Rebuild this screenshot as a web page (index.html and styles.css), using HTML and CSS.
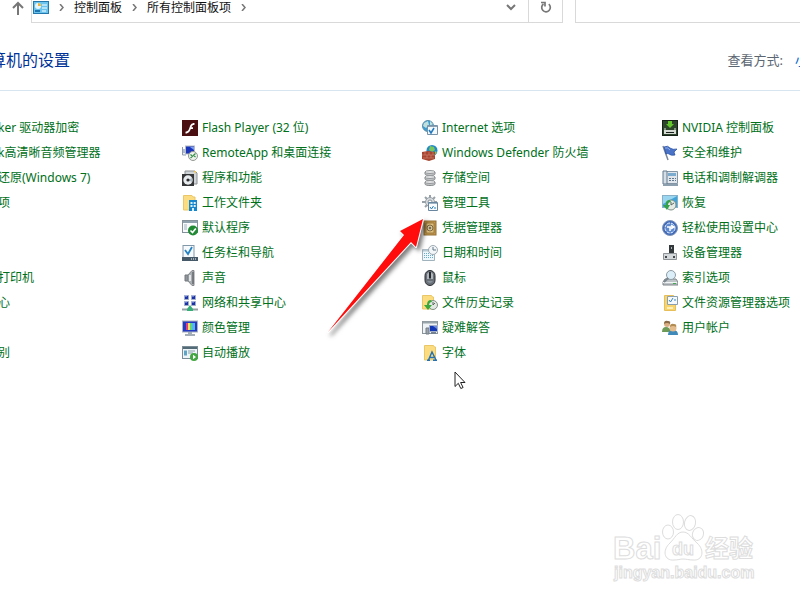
FILE: index.html
```html
<!DOCTYPE html>
<html lang="zh-CN">
<head>
    <meta charset="UTF-8">
    <meta name="viewport" content="width=device-width, initial-scale=1.0">
    <title>所有控制面板项</title>
    <link rel="stylesheet" href="styles.css">
</head>
<body>
    <nav class="toolbar">
        <button class="icon-btn up-btn" aria-label="向上">
            <svg width="12" height="14" viewBox="0 0 12 14" fill="none" stroke="#777" stroke-width="2"><path d="M6 14V2M1 7l5-5 5 5"/></svg>
        </button>
        <div class="address">
            <svg class="address-icon" width="16" height="14" viewBox="0 0 16 14"><rect x=".5" y=".5" width="15" height="12" fill="#6bc4ee" stroke="#2379ae"/><circle cx="5" cy="5" r="3" fill="#e8f6fc"/><path d="M5 5V2a3 3 0 0 1 3 3z" fill="#f0b43c"/><path d="M9 4h5M9 7h5M9 10h4" stroke="#fff"/><path d="M2 10h5" stroke="#1f75ae" stroke-width="2"/></svg>
            <svg class="sep" width="5" height="7" viewBox="0 0 5 7"><path d="M1 0l3 3.500-3 3.500" fill="none" stroke="#777" stroke-width="1.500"/></svg>
            <a href="#">控制面板</a>
            <svg class="sep" width="5" height="7" viewBox="0 0 5 7"><path d="M1 0l3 3.500-3 3.500" fill="none" stroke="#777" stroke-width="1.500"/></svg>
            <a href="#">所有控制面板项</a>
            <svg class="sep" width="5" height="7" viewBox="0 0 5 7"><path d="M1 0l3 3.500-3 3.500" fill="none" stroke="#777" stroke-width="1.500"/></svg>
            <button class="icon-btn history-btn" aria-label="以前的位置">
                <svg width="10" height="7" viewBox="0 0 10 7" fill="none" stroke="#777" stroke-width="2"><path d="M1 1l4 4 4-4"/></svg>
            </button>
            <button class="icon-btn refresh-btn" aria-label="刷新">
                <svg width="12" height="12" viewBox="0 0 12 12" fill="none" stroke="#777" stroke-width="1.700"><path d="M8.800 3.200A4.300 4.300 0 1 1 3.500 3M1 1.500h4v4"/></svg>
            </button>
        </div>
        <input class="search" type="search" aria-label="搜索控制面板">
    </nav>

    <header class="heading">
        <h1>算机的设置</h1>
        <div class="view-by">
            <span>查看方式:</span>
            <button class="view-btn">小</button>
        </div>
    </header>

    <main class="items">
        <ul class="column column-first">
            <li><a href="#">ker 驱动器加密</a></li>
            <li><a href="#">k高清晰音频管理器</a></li>
            <li><a href="#">还原(Windows 7)</a></li>
            <li><a href="#">项</a></li>
            <li></li>
            <li></li>
            <li><a href="#">打印机</a></li>
            <li><a href="#">心</a></li>
            <li></li>
            <li><a href="#">别</a></li>
        </ul>

        <ul class="column">
            <li><a href="#">
                <svg viewBox="0 0 16 16"><rect width="16" height="16" fill="#4a0f10"/><path d="M12.500 3C9 3 8.300 5.300 7.500 7.500 6.700 10 6 11.500 3.500 11.700V13.500C7 13.500 8 11 8.800 9H11V7.200H9.500C10.200 5.500 11 4.800 12.500 4.800z" fill="#fff"/></svg>
                Flash Player (32 位)</a></li>
            <li><a href="#">
                <svg viewBox="0 0 16 16"><path d="M.5 2v8H4" fill="#eee" stroke="#8c9bb0"/><path d="M1 5h2M1 7h2" stroke="#6f86b5"/><rect x="3.500" y="1" width="9" height="8" fill="#1b35b8" stroke="#b6bdc8"/><path d="M8 2h4v3z" fill="#7b9df4"/><circle cx="11" cy="11" r="4.500" fill="#eef1ec" stroke="#909890"/><path d="M8.500 9.500l2 1.700-2 2M13.500 8.500l-2 1.700 2 2" fill="none" stroke="#349047" stroke-width="1.200"/></svg>
                RemoteApp 和桌面连接</a></li>
            <li><a href="#">
                <svg viewBox="0 0 16 16"><path d="M3 1h10l2 2v11H3z" fill="#cfd4d8" stroke="#8c9194"/><path d="M12 1h2v3" fill="#f4c24a"/><rect y="4" width="12" height="12" fill="#343638"/><circle cx="6" cy="10" r="4.700" fill="#e9ecef"/><path d="M6 10l4-2v4z" fill="#aab9c4"/><circle cx="6" cy="10" r="1.600" fill="#292929"/></svg>
                程序和功能</a></li>
            <li><a href="#">
                <svg viewBox="0 0 16 16"><path d="M1.500.5H10l1 1.500h2V15H1.500z" fill="#fbdc80" stroke="#e9c668"/><rect x="7" y="5" width="8" height="11" fill="#1686cc"/><path d="M8.500 7h2v2h-2zM11.700 7h2v2h-2zM8.500 10h2v2h-2zM11.700 10h2v2h-2zM10 13h2v3h-2z" fill="#d8f1ff"/></svg>
                工作文件夹</a></li>
            <li><a href="#">
                <svg viewBox="0 0 16 16"><rect x=".5" y=".5" width="15" height="12" fill="#f8fafb" stroke="#85929b"/><path d="M1 2h14" stroke="#8fa2ae" stroke-width="2"/><path d="M2 5h3M2 7h3M2 9h3" stroke="#9eb1c0"/><circle cx="11" cy="10.500" r="5" fill="#218a35"/><path d="M8.500 10.500l2 2 3.300-4" fill="none" stroke="#fff" stroke-width="1.600"/></svg>
                默认程序</a></li>
            <li><a href="#">
                <svg viewBox="0 0 16 16"><rect x="1" y=".5" width="11" height="12" fill="#f6fafd" stroke="#8297a8"/><path d="M3 5l3 4 4-7" fill="none" stroke="#2583c5" stroke-width="1.800"/><rect y="12" width="16" height="4" fill="#465968"/><path d="M9 14h1M11 14h1M13 14h1" stroke="#fff"/></svg>
                任务栏和导航</a></li>
            <li><a href="#">
                <svg viewBox="0 0 16 16"><path d="M3 5h3v6H3z" fill="#90969b" stroke="#74797e"/><path d="M6 5l4-4.500h2v15h-2L6 11z" fill="#a9aeb2" stroke="#85898d"/><path d="M8 5v6" stroke="#e3e6e8" stroke-width="2"/><path d="M11 2v12" stroke="#666b70" stroke-width="1.500"/></svg>
                声音</a></li>
            <li><a href="#">
                <svg viewBox="0 0 16 16"><g fill="#1c32a8" stroke="#a1acc7"><path d="M2.500.5h4v4h-4zM9.500.5h4v4h-4zM2.500 6.500h4v4h-4zM9.500 6.500h4v4h-4z"/></g><path d="M3 1h2M10 1h2M3 7h2M10 7h2" stroke="#a6bafc"/><path d="M0 14.500h16" stroke="#96a1a5" stroke-width="2"/><path d="M8 10l3 4v2H5v-2z" fill="#36ae77"/></svg>
                网络和共享中心</a></li>
            <li><a href="#">
                <svg viewBox="0 0 16 16"><rect x=".5" y="1" width="15" height="11" fill="#253ac3" stroke="#abb3be"/><path d="M4 3h3v7H4z" fill="#e0407e"/><path d="M6 3h3v7H6z" fill="#f4e46a"/><path d="M8 3h2v7H8z" fill="#5fd680"/><path d="M10 3h3v7h-3z" fill="#55b5f0"/><path d="M6 12h4v2h3v2H3v-2h3z" fill="#a3adb7"/></svg>
                颜色管理</a></li>
            <li><a href="#">
                <svg viewBox="0 0 16 16"><rect x=".5" y="1.500" width="15" height="12" fill="#eef4f7" stroke="#7b8e98"/><path d="M1 3h14" stroke="#526b77" stroke-width="2"/><path d="M2 5.500h3v5H2z" fill="#60a4c5"/><path d="M6 6h7M6 8h5" stroke="#899fa9"/><circle cx="12" cy="12" r="4" fill="#43a741"/><path d="M11 9.700l3 2.300-3 2.300z" fill="#fff"/></svg>
                自动播放</a></li>
        </ul>

        <ul class="column">
            <li><a href="#">
                <svg viewBox="0 0 16 16"><circle cx="6" cy="6" r="5.500" fill="#3b9ed2" stroke="#5c8da7"/><path d="M2 3l4-2 1 4-3 3-3-2zM8 1l3 3-3 2z" fill="#bfe0dd"/><path d="M5.500 5.500h10v9h-10z" fill="#f5f8fb" stroke="#7793a9"/><path d="M6 6.500h9" stroke="#8ba1b2"/><path d="M7 10l2 3 3-5" fill="none" stroke="#207ac2" stroke-width="1.500"/></svg>
                Internet 选项</a></li>
            <li><a href="#">
                <svg viewBox="0 0 16 16"><circle cx="10" cy="5.500" r="5.500" fill="#238ac8"/><path d="M8 1l4 1 1 3-3 2-3-2zM13 6l2 1-2 3z" fill="#79c65d"/><path d="M0 7l6-1 7 1v7l-6 2-7-2z" fill="#a74531"/><path d="M0 10h13M1 13h11M3 7v3M7 7v3M11 7v3M5 10v3M9 10v3" stroke="#d08a76" stroke-width=".6"/></svg>
                Windows Defender 防火墙</a></li>
            <li><a href="#">
                <svg viewBox="0 0 16 16"><g fill="#c4c6c7" stroke="#85898c"><path d="M3 2v2c0 2 10 2 10 0V2M3 7v2c0 2 10 2 10 0V7M3 12v2c0 2 10 2 10 0v-2"/></g><g fill="#e2e4e5" stroke="#96999b"><ellipse cx="8" cy="2" rx="5" ry="1.500"/><ellipse cx="8" cy="7" rx="5" ry="1.500"/><ellipse cx="8" cy="12" rx="5" ry="1.500"/></g></svg>
                存储空间</a></li>
            <li><a href="#">
                <svg viewBox="0 0 16 16"><path d="M8 0v14M0 7h15M3 2l10 10M13 2L3 12" stroke="#98a1a7" stroke-width="2"/><circle cx="8" cy="7" r="4.500" fill="#d7dcdf" stroke="#98a1a7"/><circle cx="8" cy="7" r="2" fill="#fff" stroke="#8c969d"/><path d="M6.500 7.500h9v8h-9z" fill="#fafcff" stroke="#6986a1"/><path d="M7 8.500h8" stroke="#9fb4c5"/><path d="M8 12l1.500 2 2-3M12 13h2" fill="none" stroke="#257dbc"/></svg>
                管理工具</a></li>
            <li><a href="#">
                <svg viewBox="0 0 16 16"><rect x="2" y="1" width="12" height="14" fill="#bf9449" stroke="#937036"/><path d="M4 3h8v10H4z" fill="#dfc17d" stroke="#9b783e"/><circle cx="8" cy="8" r="3" fill="#d7c69a" stroke="#7a6740"/><circle cx="8" cy="8" r="1.200" fill="#776c59"/></svg>
                凭据管理器</a></li>
            <li><a href="#">
                <svg viewBox="0 0 16 16"><path d="M.5 4.500h12v11H.5z" fill="#eef7fb" stroke="#a0b2bc"/><path d="M1 5.500h11" stroke="#b7cad4" stroke-width="2"/><path d="M2 8.500h9M2 10.500h9M2 12.500h9" stroke="#69aaca" stroke-dasharray="1 1"/><circle cx="11" cy="5" r="4.500" fill="#f3f6f8" stroke="#9daab2"/><path d="M11 2v3h3" fill="none" stroke="#607786"/></svg>
                日期和时间</a></li>
            <li><a href="#">
                <svg viewBox="0 0 16 16"><rect x="3" y=".5" width="10" height="15" rx="5" fill="#6a7078" stroke="#292d33"/><path d="M5 9V4l2-2v7zM9 2l2 2v5H9z" fill="#b1b6bc"/><path d="M8 2v6" stroke="#252a30" stroke-width="2"/><path d="M5 11q3 4 6 0" fill="#89919a"/></svg>
                鼠标</a></li>
            <li><a href="#">
                <svg viewBox="0 0 16 16"><path d="M.5.5h9l1 1.500h1v12H.5z" fill="#fbdd80" stroke="#e9c668"/><circle cx="11" cy="10" r="4.500" fill="#e2e8e3" stroke="#849187"/><path d="M11 7v3l2-2" fill="none" stroke="#59665d"/><path d="M9 5q-4 0-4 5H2l4 5 4-5H7q0-3 3-3z" fill="#3ba83c"/></svg>
                文件历史记录</a></li>
            <li><a href="#">
                <svg viewBox="0 0 16 16"><rect x=".5" y="1.500" width="15" height="12" fill="#f0f3f5" stroke="#89949b"/><path d="M1 2.500h14" stroke="#98a4ab" stroke-width="2"/><path d="M4 8h3v6H4z" fill="#9aa2aa" stroke="#737c88"/><rect x="7.500" y="5.500" width="8" height="6" fill="#1437b5" stroke="#a5b0c8"/><path d="M11 6h4v3z" fill="#6b8ce0"/><path d="M9 13h5" stroke="#758293" stroke-width="2"/></svg>
                疑难解答</a></li>
            <li><a href="#">
                <svg viewBox="0 0 16 16"><path d="M2.500.5h9l1 1.500h1v13h-11z" fill="#fbdc80" stroke="#e9c668"/><path d="M5 15.200h3M11 15.200h4M6.500 15L10 7l4 8M8 12.500h4.500" fill="none" stroke="#2471b3" stroke-width="1.400"/></svg>
                字体</a></li>
        </ul>

        <ul class="column">
            <li><a href="#">
                <svg viewBox="0 0 16 16"><rect width="16" height="16" fill="#182118"/><rect x="1" y="1" width="14" height="14" fill="#2c452b"/><path d="M6 1h4v3h2L8 8 4 4h2z" fill="#63c52c"/><path d="M3 8v3M13 8v3" stroke="#dfe5dd"/><path d="M2 10h12v4H2z" fill="#d5dad3"/><path d="M4 12h8v1H4z" fill="#192019"/></svg>
                NVIDIA 控制面板</a></li>
            <li><a href="#">
                <svg viewBox="0 0 16 16"><path d="M1 1l5 14" stroke="#7b879d" stroke-width="1.500"/><path d="M2 2q4-2 6 1 3 2 7 1l-3 3 1 3q-4 1-6-1-1-1-3 0z" fill="#4a73c8" stroke="#234ca1" stroke-width=".7"/><path d="M3 3q3-1 5 2" stroke="#93b0eb" fill="none"/></svg>
                安全和维护</a></li>
            <li><a href="#">
                <svg viewBox="0 0 16 16"><path d="M1.500 1.500h14v12h-14z" fill="#e0e6eb" stroke="#8496a5"/><path d="M1 1h4v13H1z" fill="#d3dee7" stroke="#647b8e"/><path d="M6 3h8v3H6z" fill="#7cabd0"/><path d="M7 8.500h7M7 10.500h7" stroke="#60798d" stroke-dasharray="2 1"/><path d="M1 15h15" stroke="#8b9faf" stroke-width="2"/></svg>
                电话和调制解调器</a></li>
            <li><a href="#">
                <svg viewBox="0 0 16 16"><rect x=".5" y=".5" width="15" height="12" fill="#40a4dc" stroke="#88b1c8"/><path d="M1 1h14L1 9z" fill="#9bd6f1"/><circle cx="9" cy="10" r="5" fill="#e6ebe7" stroke="#7e9287"/><path d="M9 7v3l3-2" fill="none" stroke="#596a60"/><path d="M8 5Q3 5 4 10H1l4 5 3-5H6q0-3 3-3z" fill="#34a24b"/></svg>
                恢复</a></li>
            <li><a href="#">
                <svg viewBox="0 0 16 16"><circle cx="8" cy="8" r="7.500" fill="#416bb9" stroke="#8195ba"/><circle cx="8" cy="8" r="5" fill="#5f89cf" stroke="#eef4ff" stroke-dasharray="3 1"/><path d="M5 7h7M9 5l3 2-3 2M8 7v4" fill="none" stroke="#fff" stroke-width="1.500"/></svg>
                轻松使用设置中心</a></li>
            <li><a href="#">
                <svg viewBox="0 0 16 16"><rect x="7" y="0" width="5" height="9" fill="#33383b"/><path d="M9 2h1v2H9z" fill="#a9b4b9"/><path d="M1.500 8.500h13v6h-13z" fill="#d5d8da" stroke="#8d9396"/><path d="M3 11h2v2H3zM11 11h2v2h-2z" fill="#43494d"/></svg>
                设备管理器</a></li>
            <li><a href="#">
                <svg viewBox="0 0 16 16"><path d="M3 9h11l2 3v3H1v-3z" fill="#bec4c7" stroke="#7e8589"/><path d="M1 12.500h14" stroke="#f2f5f7"/><circle cx="9" cy="5" r="4.500" fill="#dceef8" stroke="#8e9da6"/><path d="M6 8l-4 4" stroke="#7b878f" stroke-width="2"/><path d="M11 13.500h3" stroke="#44a751"/></svg>
                索引选项</a></li>
            <li><a href="#">
                <svg viewBox="0 0 16 16"><path d="M2.500.5h9l1 1.500h1v13.500h-11z" fill="#f8d46f" stroke="#e6bf5a"/><path d="M5.500 1.500h10v8h-10z" fill="#f6f9fc" stroke="#8aa0b1"/><path d="M7 5l1.500 2L11 3M12 5h2" fill="none" stroke="#3884bf"/><path d="M5 13h6" stroke="#fff0b9" stroke-width="2"/></svg>
                文件资源管理器选项</a></li>
            <li><a href="#">
                <svg viewBox="0 0 16 16"><path d="M0 12q0-5 4-5t5 5z" fill="#6e9a57"/><circle cx="5" cy="4" r="3" fill="#dbae83"/><path d="M2 4q0-4 4-3 3 0 2 3Q5 2 2 4z" fill="#8a6a48"/><path d="M6 15q0-5 5-5t5 5z" fill="#408ab9"/><circle cx="11" cy="8" r="3.500" fill="#e3bb8d"/><path d="M8 7q0-4 4-3 3 0 2 3-3-2-6 0z" fill="#b08c52"/></svg>
                用户帐户</a></li>
        </ul>
    </main>

    <!-- pointer to the highlighted item -->
    <svg class="arrow" width="110" height="130" viewBox="0 0 110 130">
        <path d="M98 5L75 17l4 4L3 118 86 28l5 5z" fill="#fff" stroke="#fff" stroke-width="2" stroke-linejoin="round"/>
        <path d="M98 5L75 17l4 4L3 118 86 28l5 5z" fill="#ff0d0d"/>
    </svg>
    <svg class="cursor" width="13" height="19" viewBox="0 0 13 19"><path d="M1 1v14.500l3.300-3.200 2.500 5.200 2.300-1-2.500-5H11z" fill="#fff" stroke="#222"/></svg>

    <svg class="watermark" width="150" height="75" viewBox="0 0 150 75">
        <g fill="#fff" stroke="#ddd">
            <text class="wm-bai" x="3" y="49">Bai</text>
            <ellipse cx="58" cy="22" rx="5.500" ry="7"/>
            <ellipse cx="68" cy="12" rx="5.500" ry="7.500"/>
            <ellipse cx="80" cy="13" rx="5.500" ry="7.500" transform="rotate(12 80 13)"/>
            <ellipse cx="88" cy="24" rx="5.500" ry="6.500" transform="rotate(20 88 24)"/>
            <path d="M73 22c-6 0-8 6-13 11-8 7-6 18 4 17 4 0 6-1 9-1s6 1 10 1c10 1 12-10 4-17-6-5-8-11-14-11z"/>
            <text class="wm-du" x="62" y="45">du</text>
            <text class="wm-cn" x="95" y="47">经验</text>
            <text class="wm-url" x="4" y="68">jingyan.baidu.com</text>
        </g>
    </svg>
</body>
</html>
```
FILE: styles.css
```css
* {
    box-sizing: border-box;
}

body {
    position: relative;
    margin: 0;
    min-height: 100vh;
    overflow: hidden;
    background: #fff;
    color: #111;
    font-family: "Noto Sans", "Noto Sans CJK SC", sans-serif;
    font-size: 12px;
    line-height: 16px;
    white-space: nowrap;
}

a {
    color: inherit;
    text-decoration: none;
}

a:hover { text-decoration: underline; }

button {
    padding: 0;
    border: none;
    background: none;
    font: inherit;
    cursor: pointer;
}

/* toolbar */
.toolbar {
    display: flex;
    height: 23px;
}

.icon-btn {
    display: flex;
    align-items: center;
    justify-content: center;
}

.up-btn {
    width: 31px;
    padding: 0 0 8px 5px;
}

.address {
    display: flex;
    flex: 1;
    align-items: center;
    border: 1px solid #d9d9d9;
    border-top: none;
    padding-left: 1px;
}

.address > * {
    margin-bottom: 7px;
}

.address .sep {
    margin-left: 10px;
    margin-right: 10px;
}

.address .history-btn {
    width: 34px;
    margin-left: auto;
}

.address .refresh-btn {
    align-self: stretch;
    width: 34px;
    margin-bottom: 0;
    padding-bottom: 8px;
    border-left: 1px solid #d9d9d9;
}

.search {
    width: 225px;
    margin-left: 12px;
    border: 1px solid #d9d9d9;
    border-top: none;
    border-right: none;
    outline: none;
}

/* heading */
.heading {
    display: flex;
    align-items: center;
    justify-content: space-between;
    height: 68px;
    padding-top: 6px;
    border-bottom: 1px solid #d6e5f0;
}

h1 {
    margin: 0 0 0 -10px;
    color: #003399;
    font-size: 16px;
    font-weight: normal;
}

.view-by {
    display: flex;
    gap: 12px;
    margin-right: -8px;
    color: #5c6672;
    font-size: 13px;
}

.view-btn { color: #0066cc; }

/* item list */
.items {
    display: grid;
    grid-template-columns: 182px 240px 240px 1fr;
    padding-top: 24px;
}

.column {
    margin: 0;
    padding: 0;
    list-style: none;
    color: #00701a;
}

.column-first { margin-left: -2px; }

.column li {
    height: 25px;
}

.column a {
    display: flex;
    align-items: center;
    gap: 4px;
    height: 25px;
}

.column svg {
    flex: none;
    width: 16px;
    height: 16px;
}

/* overlays */
.arrow {
    position: absolute;
    top: 214px;
    left: 325px;
    filter: drop-shadow(3px 3px 2px rgba(0, 0, 0, 0.5));
    pointer-events: none;
}

.cursor {
    position: absolute;
    top: 371px;
    left: 454px;
    pointer-events: none;
}

.watermark {
    position: absolute;
    right: 40px;
    bottom: 15px;
    overflow: visible;
    pointer-events: none;
}

.watermark text {
    font-family: "Liberation Sans", "Noto Sans CJK SC", sans-serif;
    font-weight: bold;
}

.wm-bai { font-size: 31px; }
.wm-du { font-size: 18px; }
.wm-cn { font-size: 24px; }
.wm-url { font-size: 16px; }
```
